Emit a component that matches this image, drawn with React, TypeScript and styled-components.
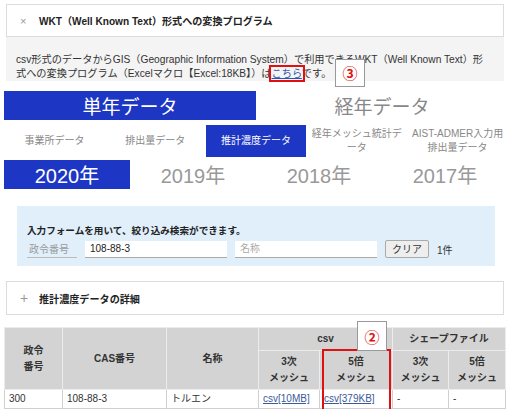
import styled, { createGlobalStyle } from 'styled-components';

const GlobalStyle = createGlobalStyle`
  body {
    margin: 0;
    background: #fff;
    font-family: "Liberation Sans", "Noto Sans CJK JP", sans-serif;
    color: #333;
  }
`;

const BLUE = '#1d36c4';

const Page = styled.div`
  width: 504px;
  padding: 4px 4px 0;
`;

const AccordionHead = styled.div`
  margin: 0 4px 0 2px;
  height: 31px;
  border: 1px solid #dcdcdc;
  display: flex;
  align-items: center;
  padding-left: 13px;
  gap: 11px;
  font-size: 10.1px;
  font-weight: bold;
  color: #222;
`;

const Sign = styled.span<{ $big?: boolean }>`
  width: 8px;
  color: #999;
  font-weight: normal;
  font-size: ${p => (p.$big ? '14px' : '11px')};
`;

const Panel = styled.div`
  position: relative;
  margin: 0 4px 0 2px;
  background: #f4f4f4;
  padding: 16px 14px 0 10px;
  font-size: 10.2px;
  line-height: 14px;
  color: #333;
`;

const HighLink = styled.a`
  color: #2a56b0;
  text-decoration: underline;
  outline: 2px solid #e01010;
  outline-offset: 1px;
`;

const Badge = styled.div<{ $x: number; $y: number; $h: number }>`
  position: absolute;
  left: ${p => p.$x}px;
  top: ${p => p.$y}px;
  width: 28px;
  height: ${p => p.$h}px;
  background: #fff;
  border: 1px solid #999;
  display: flex;
  align-items: center;
  justify-content: center;
  color: #e01010;
  font-size: 15px;
  font-weight: bold;
  font-family: "Noto Sans CJK JP", sans-serif;
  z-index: 2;
`;

const MainTabs = styled.div`
  margin-top: 10px;
  display: grid;
  grid-template-columns: 1fr 1fr;
  height: 29px;
`;

const MainTab = styled.div<{ $active?: boolean }>`
  display: flex;
  align-items: center;
  justify-content: center;
  font-size: 19px;
  background: ${p => (p.$active ? BLUE : 'transparent')};
  color: ${p => (p.$active ? '#fff' : '#888')};
`;

const SubTabs = styled.div`
  margin-top: 5px;
  display: grid;
  grid-template-columns: repeat(5, 1fr);
  height: 32px;
`;

const SubTab = styled.div<{ $active?: boolean }>`
  display: flex;
  align-items: center;
  justify-content: center;
  text-align: center;
  font-size: 10px;
  line-height: 14px;
  padding: 0 3px;
  overflow: hidden;
  background: ${p => (p.$active ? BLUE : 'transparent')};
  color: ${p => (p.$active ? '#fff' : '#888')};
`;

const YearTabs = styled.div`
  margin-top: 3px;
  display: grid;
  grid-template-columns: repeat(4, 1fr);
  height: 29px;
`;

const YearTab = styled(MainTab)`
  font-size: 20px;
  color: ${p => (p.$active ? '#fff' : '#999')};
`;

const SearchBox = styled.div`
  margin: 17px 13px 0 13px;
  background: #e1effb;
  padding: 18px 10px 8px;
`;

const SearchTitle = styled.div`
  font-size: 9.6px;
  line-height: 13px;
  font-weight: bold;
  color: #222;
  margin-bottom: 3px;
`;

const SearchRow = styled.div`
  display: flex;
  align-items: center;
  gap: 8px;
  height: 18px;
  font-size: 10px;
`;

const FieldLabel = styled.div`
  width: 50px;
  flex: none;
  height: 17px;
  border-bottom: 1px solid #bbb;
  color: #999;
  display: flex;
  align-items: center;
  padding-left: 2px;
  box-sizing: border-box;
`;

const Field = styled.input`
  width: 142px;
  flex: none;
  height: 17px;
  box-sizing: border-box;
  border: none;
  border-bottom: 1px solid #aaa;
  background: #fff;
  padding: 0 5px;
  font-size: 10px;
  font-family: "Liberation Sans", "Noto Sans CJK JP", sans-serif;
  color: #222;
  &::placeholder {
    color: #aaa;
  }
`;

const ClearButton = styled.button`
  height: 18px;
  padding: 0 6px;
  border: 1px solid #aaa;
  border-radius: 2px;
  background: #eee;
  font-size: 10px;
  line-height: 16px;
  font-family: "Noto Sans CJK JP", sans-serif;
  color: #333;
`;

const Count = styled.span`
  color: #333;
`;

const SecondHead = styled(AccordionHead)`
  margin-top: 15px;
  height: 32px;
`;

const TableWrap = styled.div`
  position: relative;
  margin-top: 12px;
  width: 501px;
`;

const Table = styled.table`
  width: 100%;
  border-collapse: collapse;
  font-size: 10px;
  table-layout: fixed;
  th {
    background: #d3d3d3;
    border: 1px solid #ececec;
    font-weight: bold;
    color: #333;
    line-height: 16px;
    padding: 0;
    text-align: center;
  }
  td {
    border: 1px solid #d0d0d0;
    height: 18px;
    line-height: 14px;
    padding: 0 4px;
    color: #333;
  }
`;

const HeadTop = styled.th`
  height: 22px;
`;

const HeadSub = styled.th`
  height: 38px;
`;

const CsvLink = styled.a`
  color: #3b5a9a;
  text-decoration: underline;
`;

const RedFrame = styled.div`
  position: absolute;
  left: 318px;
  top: 22px;
  width: 65px;
  height: 60px;
  border: 2px solid #e01010;
  pointer-events: none;
`;

export default function App() {
  return (
    <Page>
      <GlobalStyle />
      <AccordionHead>
        <Sign>×</Sign>
        WKT（Well Known Text）形式への変換プログラム
      </AccordionHead>
      <Panel>
        csv形式のデータからGIS（Geographic Information System）で利用できるWKT（Well Known Text）形式への変換プログラム（Excelマクロ【Excel:18KB】）は<HighLink>こちら</HighLink>です。
        <Badge $x={329} $y={22} $h={26}>③</Badge>
      </Panel>

      <MainTabs>
        <MainTab $active>単年データ</MainTab>
        <MainTab>経年データ</MainTab>
      </MainTabs>

      <SubTabs>
        <SubTab>事業所データ</SubTab>
        <SubTab>排出量データ</SubTab>
        <SubTab $active>推計濃度データ</SubTab>
        <SubTab>経年メッシュ統計データ</SubTab>
        <SubTab>AIST-ADMER入力用<br />排出量データ</SubTab>
      </SubTabs>

      <YearTabs>
        <YearTab $active>2020年</YearTab>
        <YearTab>2019年</YearTab>
        <YearTab>2018年</YearTab>
        <YearTab>2017年</YearTab>
      </YearTabs>

      <SearchBox>
        <SearchTitle>入力フォームを用いて、絞り込み検索ができます。</SearchTitle>
        <SearchRow>
          <FieldLabel>政令番号</FieldLabel>
          <Field defaultValue="108-88-3" />
          <Field placeholder="名称" />
          <ClearButton>クリア</ClearButton>
          <Count>1件</Count>
        </SearchRow>
      </SearchBox>

      <SecondHead>
        <Sign $big>+</Sign>
        推計濃度データの詳細
      </SecondHead>

      <TableWrap>
        <Table>
          <colgroup>
            <col style={{ width: 58 }} />
            <col style={{ width: 104 }} />
            <col style={{ width: 92 }} />
            <col style={{ width: 61 }} />
            <col style={{ width: 73 }} />
            <col style={{ width: 56 }} />
            <col style={{ width: 57 }} />
          </colgroup>
          <thead>
            <tr>
              <th rowSpan={2}>政令<br />番号</th>
              <th rowSpan={2}>CAS番号</th>
              <th rowSpan={2}>名称</th>
              <HeadTop colSpan={2}>csv</HeadTop>
              <HeadTop colSpan={2}>シェープファイル</HeadTop>
            </tr>
            <tr>
              <HeadSub>3次<br />メッシュ</HeadSub>
              <HeadSub>5倍<br />メッシュ</HeadSub>
              <HeadSub>3次<br />メッシュ</HeadSub>
              <HeadSub>5倍<br />メッシュ</HeadSub>
            </tr>
          </thead>
          <tbody>
            <tr>
              <td>300</td>
              <td>108-88-3</td>
              <td>トルエン</td>
              <td><CsvLink>csv[10MB]</CsvLink></td>
              <td><CsvLink>csv[379KB]</CsvLink></td>
              <td>-</td>
              <td>-</td>
            </tr>
          </tbody>
        </Table>
        <Badge $x={353} $y={-6} $h={28}>②</Badge>
        <RedFrame />
      </TableWrap>
    </Page>
  );
}
